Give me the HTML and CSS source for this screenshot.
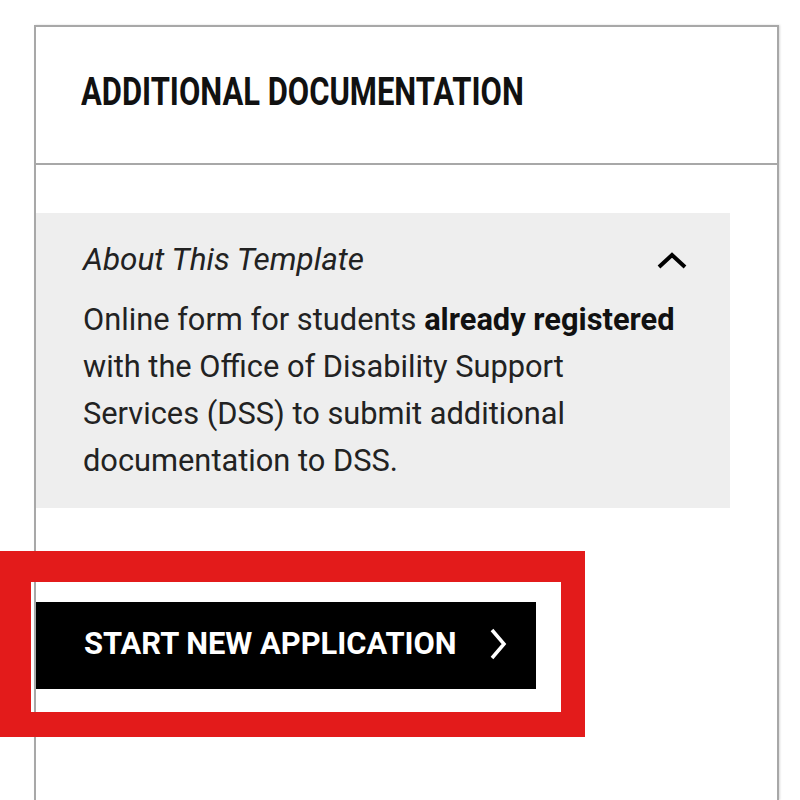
FILE: index.html
```html
<!DOCTYPE html>
<html>
<head>
<meta charset="utf-8">
<link rel="stylesheet" href="styles.css">
</head>
<body>
<div class="card">
  <div class="card-header">
    <h2 class="card-title"><span class="cond">ADDITIONAL DOCUMENTATION</span></h2>
  </div>
  <div class="card-body">
    <div class="about">
      <div class="about-head">
        <span class="about-title">About This Template</span>
        <svg class="chev-up" width="32" height="20" viewBox="0 0 32 20"><path d="M3 17 L16 5 L29 17" fill="none" stroke="#000" stroke-width="4"/></svg>
      </div>
      <p class="about-text">Online form for students <b>already registered</b> with the Office of Disability Support Services (DSS) to submit additional documentation to DSS.</p>
    </div>
    <a class="btn" href="#"><span class="cond-btn btn-label">START NEW APPLICATION</span><svg class="chev-right" width="20" height="34" viewBox="0 0 20 34"><path d="M4 3 L16 17 L4 31" fill="none" stroke="#fff" stroke-width="3.5"/></svg></a>
  </div>
</div>
<div class="highlight"></div>
</body>
</html>
```
FILE: styles.css
```css
html, body {
  margin: 0;
  padding: 0;
  background: #fff;
  overflow: hidden;
}
body {
  font-family: Roboto, "Liberation Sans", sans-serif;
  color: #1a1a1a;
  height: 800px;
}
.card {
  margin: 25px 0 0 34px;
  width: 741px;
  height: 773px;
  border: 2px solid #a8a8a8;
  border-bottom: none;
  box-shadow: 1px 0 2px rgba(0,0,0,0.15);
}
.card-header {
  height: 136px;
  border-bottom: 2px solid #a8a8a8;
  display: flex;
  align-items: center;
  padding-left: 45px;
}
.card-title {
  margin: -6px 0 0;
  font-size: 38px;
  font-weight: 700;
  color: #111;
  line-height: 1;
}
.cond {
  display: inline-block;
  transform: scaleX(0.815);
  transform-origin: left center;
  white-space: nowrap;
}
.cond-btn {
  display: inline-block;
  transform: scaleX(0.965);
  transform-origin: left center;
  white-space: nowrap;
}
.card-body {
  padding-top: 48px;
}
.about {
  background: #eeeeee;
  width: 694px;
  height: 295px;
  box-sizing: border-box;
  padding: 28px 42px 0 47px;
}
.about-head {
  display: flex;
  justify-content: space-between;
  align-items: center;
}
.about-title {
  font-style: italic;
  font-size: 31.5px;
  color: #222;
}
.about-text {
  margin: 18px 0 0;
  width: 598px;
  font-size: 30.8px;
  line-height: 47px;
  color: #222;
}
.about-text b {
  font-weight: 700;
  color: #111;
}
.btn {
  margin-top: 94px;
  width: 500px;
  height: 87px;
  background: #000;
  display: flex;
  align-items: center;
  padding: 0 0 6px 48px;
  box-sizing: border-box;
  text-decoration: none;
  position: relative;
}
.btn-label {
  color: #fff;
  font-size: 32px;
  font-weight: 700;
}
.chev-right {
  position: absolute;
  left: 452px;
  top: 25px;
}
.highlight {
  position: absolute;
  left: 0;
  top: 551px;
  width: 585px;
  height: 186px;
  box-sizing: border-box;
  border-style: solid;
  border-color: #e31b1b;
  border-width: 31px 24px 25px 31px;
}
```
